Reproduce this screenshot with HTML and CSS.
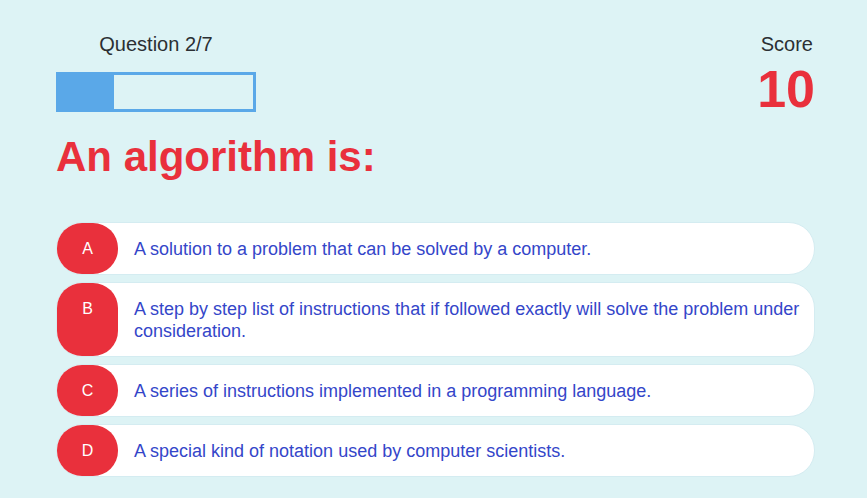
FILE: index.html
```html
<!DOCTYPE html>
<html lang="en">
<head>
<meta charset="utf-8">
<title>Quiz</title>
<link rel="stylesheet" href="styles.css">
</head>
<body>
<div class="page">
  <div class="top">
    <div class="progress-block">
      <div class="qlabel">Question 2/7</div>
      <div class="progress"><div class="fill" style="width: 28.4%"></div></div>
    </div>
    <div class="score">
      <div class="score-label">Score</div>
      <div class="score-value">10</div>
    </div>
  </div>
  <h1 class="question">An algorithm is:</h1>
  <div class="options">
    <div class="option"><div class="badge">A</div><div class="text">A solution to a problem that can be solved by a computer.</div></div>
    <div class="option"><div class="badge">B</div><div class="text">A step by step list of instructions that if followed exactly will solve the problem under consideration.</div></div>
    <div class="option"><div class="badge">C</div><div class="text">A series of instructions implemented in a programming language.</div></div>
    <div class="option"><div class="badge">D</div><div class="text">A special kind of notation used by computer scientists.</div></div>
  </div>
</div>
</body>
</html>
```
FILE: styles.css
```css
html, body {
  margin: 0;
  padding: 0;
  background: #ddf3f5;
  font-family: "Liberation Sans", Arial, sans-serif;
}
.page {
  padding: 33px 52px 0 56px;
}
.top {
  display: flex;
  justify-content: space-between;
  align-items: flex-start;
}
.progress-block {
  width: 200px;
}
.qlabel {
  text-align: center;
  font-size: 20px;
  line-height: 23px;
  color: #2b2f33;
  margin-bottom: 16px;
}
.progress {
  box-sizing: border-box;
  height: 40px;
  border: 3px solid #5aa8e8;
}
.fill {
  height: 100%;
  background: #5aa8e8;
}
.score {
  text-align: right;
  margin-right: 2px;
}
.score-label {
  font-size: 20px;
  line-height: 23px;
  color: #2b2f33;
}
.score-value {
  font-size: 52px;
  line-height: 44px;
  font-weight: bold;
  color: #e9303c;
  margin-top: 11px;
  margin-right: -2px;
}
.question {
  margin: 20px 0 0 0;
  font-size: 42px;
  line-height: 50px;
  font-weight: bold;
  color: #e9303c;
}
.options {
  margin-top: 40px;
  display: flex;
  flex-direction: column;
  gap: 7px;
}
.option {
  display: flex;
  background: #ffffff;
  border: 1px solid #d4ecf1;
  border-radius: 26px;
}
.badge {
  flex: 0 0 61px;
  background: #e9303c;
  color: #ffffff;
  border-radius: 25px;
  text-align: center;
  font-size: 16px;
  line-height: 22px;
  padding-top: 15px;
}
.text {
  flex: 1;
  padding: 15px 10px 14px 16px;
  font-size: 18px;
  line-height: 22px;
  color: #3446c9;
}
```
